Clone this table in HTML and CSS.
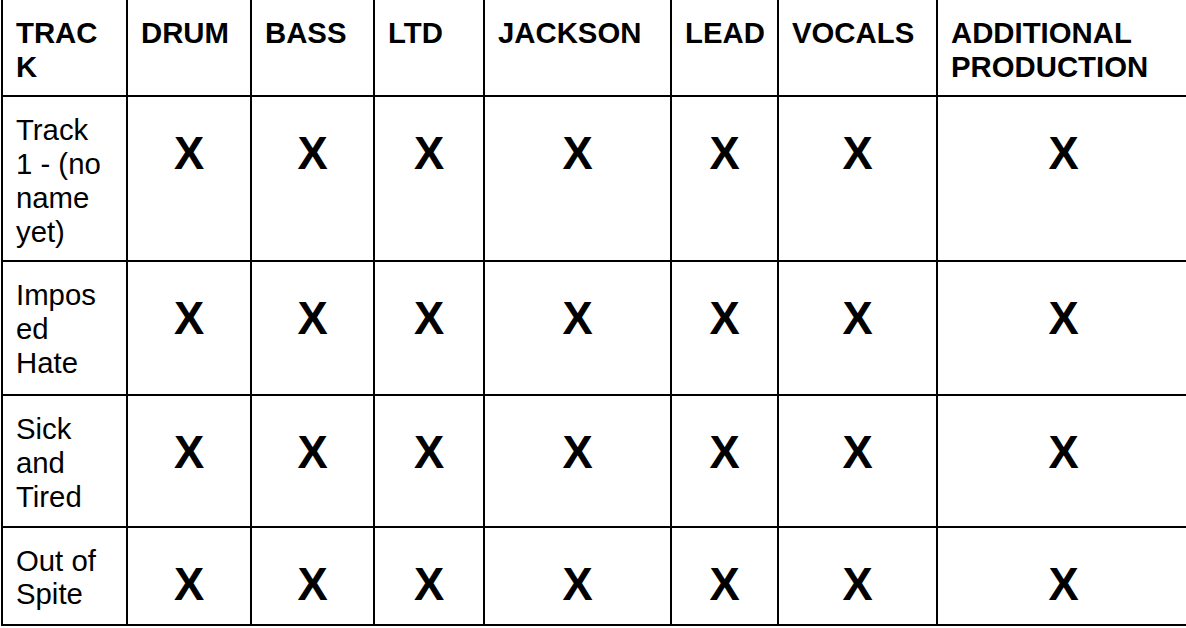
FILE: index.html
```html
<!DOCTYPE html>
<html>
<head>
<meta charset="utf-8">
<link rel="stylesheet" href="styles.css">
</head>
<body>
<table class="grid">
  <colgroup>
    <col class="c-track"><col class="c-drum"><col class="c-bass"><col class="c-ltd"><col class="c-jackson"><col class="c-lead"><col class="c-vocals"><col class="c-add">
  </colgroup>
  <thead>
    <tr class="head">
      <th>TRAC<br>K</th><th>DRUM</th><th>BASS</th><th>LTD</th><th>JACKSON</th><th>LEAD</th><th>VOCALS</th><th>ADDITIONAL PRODUCTION</th>
    </tr>
  </thead>
  <tbody>
    <tr class="r1">
      <td class="name">Track<br>1 - (no<br>name<br>yet)</td>
      <td class="x">X</td><td class="x">X</td><td class="x">X</td><td class="x">X</td><td class="x">X</td><td class="x">X</td><td class="x">X</td>
    </tr>
    <tr class="r2">
      <td class="name">Impos<br>ed<br>Hate</td>
      <td class="x">X</td><td class="x">X</td><td class="x">X</td><td class="x">X</td><td class="x">X</td><td class="x">X</td><td class="x">X</td>
    </tr>
    <tr class="r3">
      <td class="name">Sick<br>and<br>Tired</td>
      <td class="x">X</td><td class="x">X</td><td class="x">X</td><td class="x">X</td><td class="x">X</td><td class="x">X</td><td class="x">X</td>
    </tr>
    <tr class="r4">
      <td class="name">Out of<br>Spite</td>
      <td class="x">X</td><td class="x">X</td><td class="x">X</td><td class="x">X</td><td class="x">X</td><td class="x">X</td><td class="x">X</td>
    </tr>
  </tbody>
</table>
</body>
</html>
```

FILE: styles.css
```css
html, body {
  margin: 0;
  padding: 0;
  background: #fff;
}

body {
  font-family: "Liberation Sans", Arial, sans-serif;
  color: #000;
  padding-left: 1px;
}

.grid {
  border-collapse: collapse;
  table-layout: fixed;
  width: 1188px;
}

.c-track { width: 125px; }
.c-drum { width: 124px; }
.c-bass { width: 123px; }
.c-ltd { width: 110px; }
.c-jackson { width: 187px; }
.c-lead { width: 107px; }
.c-vocals { width: 159px; }
.c-add { width: 253px; }

.grid th,
.grid td {
  border: 2px solid #000;
  vertical-align: top;
  text-align: left;
  padding: 16px 13px 13px 13px;
  font-size: 29.33px;
  line-height: 1.15;
}

.grid th {
  font-weight: bold;
  border-top-style: hidden;
  padding-bottom: 12px;
}

.r1 td {
  padding-bottom: 12px;
}

.r2 td {
  padding-bottom: 15px;
}

.r3 td {
  padding-bottom: 12px;
}

.grid td.name {
  font-weight: normal;
}

.grid td.x {
  text-align: center;
  font-weight: bold;
  font-size: 45.33px;
  padding-top: 31px;
}
```
